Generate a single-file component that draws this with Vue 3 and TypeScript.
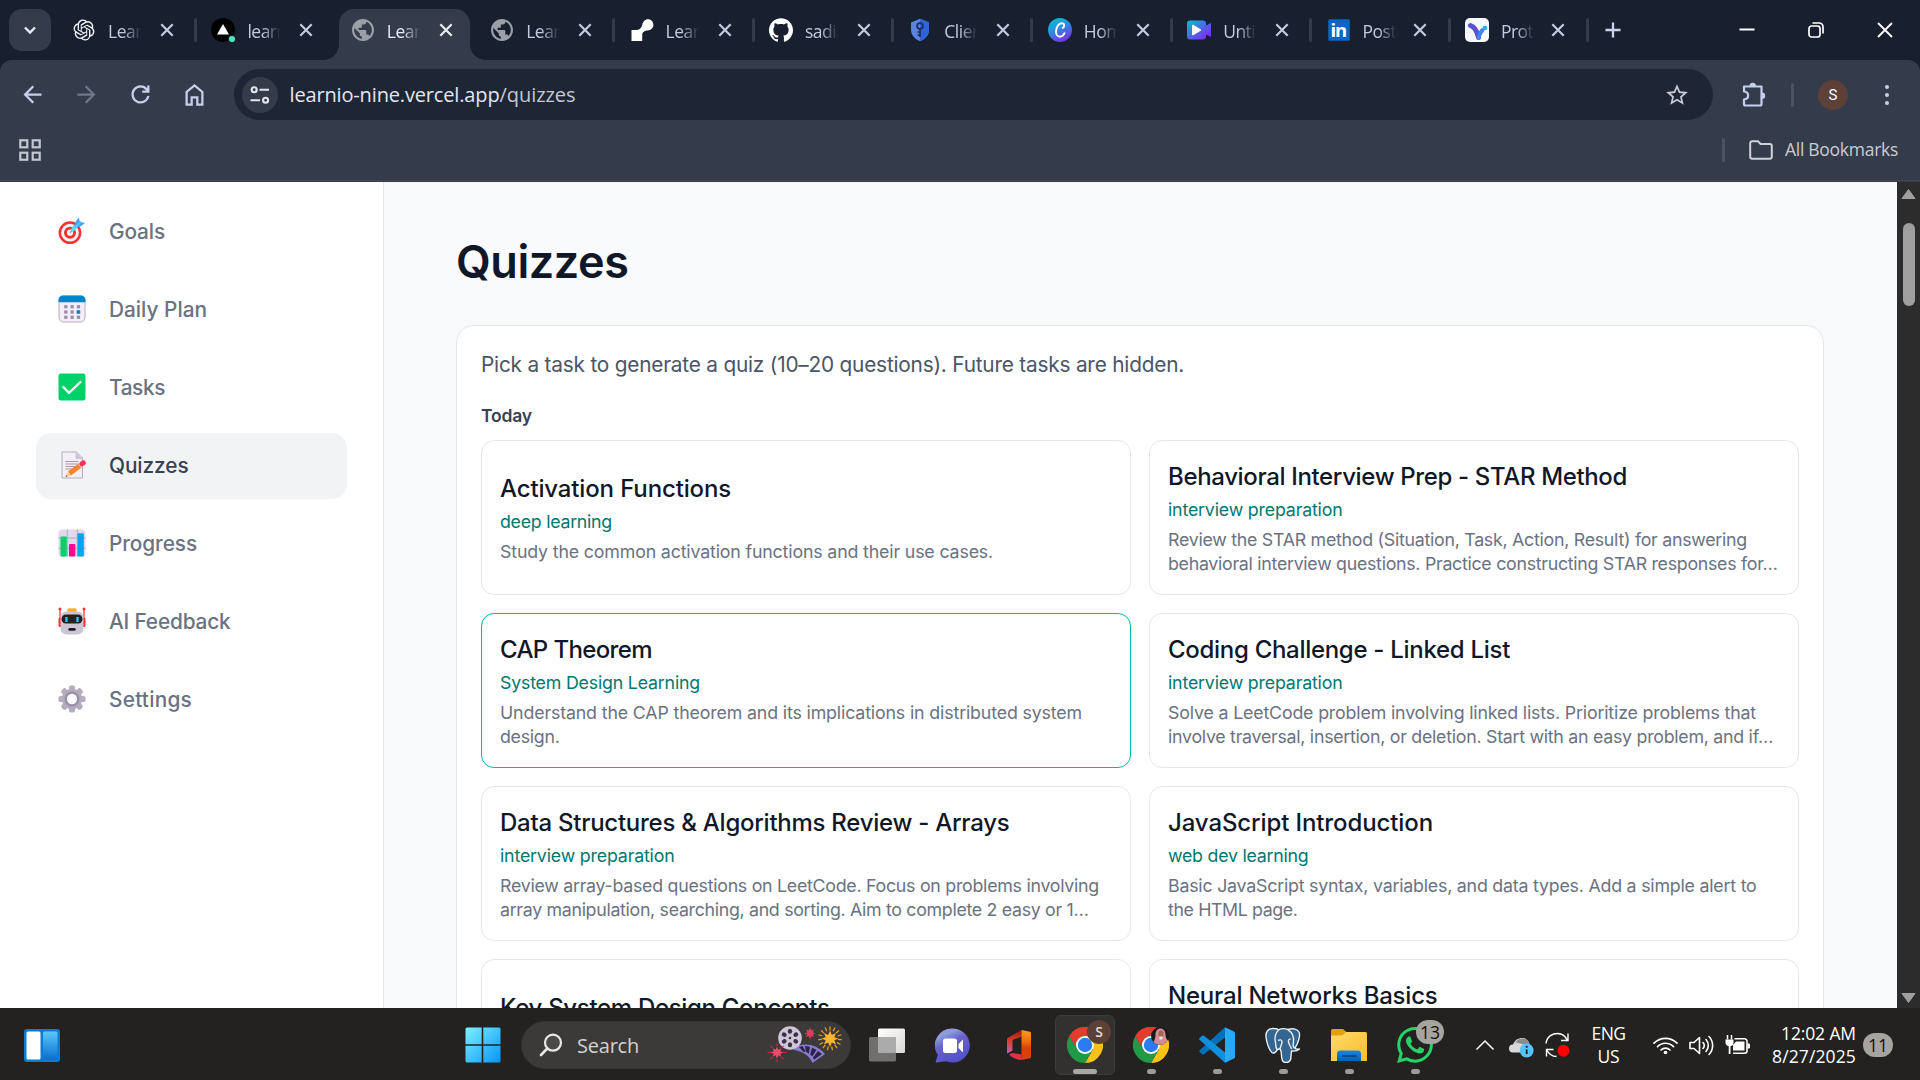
<script setup lang="ts">
import type { Directive } from 'vue'

interface Tab { icon: string; title: string; active?: boolean; divider?: boolean }
interface NavItem { icon: string; label: string; width: number; active?: boolean }
interface Line { text: string; width: number }
interface Quiz { title: Line; goal: Line; lines: Line[]; selected?: boolean }

// Spreads the letters of a run so that it takes the given advance width.
const vTrack: Directive<HTMLElement, number> = {
  mounted(el, { value }) {
    const count = (el.textContent ?? '').trim().length
    const natural = el.getBoundingClientRect().width
    if (count > 0) el.style.letterSpacing = `${((value - natural) / count).toFixed(3)}px`
  },
}

const tabs: Tab[] = [
  { icon: 'openai', title: 'Learn', divider: true },
  { icon: 'vercel', title: 'learnio' },
  { icon: 'globe', title: 'Learn', active: true },
  { icon: 'globe', title: 'Learn', divider: true },
  { icon: 'render', title: 'Learn', divider: true },
  { icon: 'github', title: 'sadia', divider: true },
  { icon: 'shield', title: 'Client', divider: true },
  { icon: 'canva', title: 'Home', divider: true },
  { icon: 'clip', title: 'Untitl', divider: true },
  { icon: 'linkedin', title: 'Post |', divider: true },
  { icon: 'proto', title: 'Proto', divider: true },
]

const nav: NavItem[] = [
  { icon: 'goals', label: 'Goals', width: 56 },
  { icon: 'plan', label: 'Daily Plan', width: 98 },
  { icon: 'tasks', label: 'Tasks', width: 56 },
  { icon: 'quizzes', label: 'Quizzes', width: 79.5, active: true },
  { icon: 'progress', label: 'Progress', width: 88 },
  { icon: 'feedback', label: 'AI Feedback', width: 121.5 },
  { icon: 'settings', label: 'Settings', width: 83 },
]

const quizzes: Quiz[] = [
  {
    title: { text: 'Activation Functions', width: 231 },
    goal: { text: 'deep learning', width: 112 },
    lines: [{ text: 'Study the common activation functions and their use cases.', width: 493 }],
  },
  {
    title: { text: 'Behavioral Interview Prep - STAR Method', width: 459 },
    goal: { text: 'interview preparation', width: 174.5 },
    lines: [
      { text: 'Review the STAR method (Situation, Task, Action, Result) for answering', width: 579 },
      { text: 'behavioral interview questions. Practice constructing STAR responses for…', width: 609.5 },
    ],
  },
  {
    title: { text: 'CAP Theorem', width: 152 },
    goal: { text: 'System Design Learning', width: 200 },
    lines: [
      { text: 'Understand the CAP theorem and its implications in distributed system', width: 582 },
      { text: 'design.', width: 59.5 },
    ],
    selected: true,
  },
  {
    title: { text: 'Coding Challenge - Linked List', width: 342 },
    goal: { text: 'interview preparation', width: 174.5 },
    lines: [
      { text: 'Solve a LeetCode problem involving linked lists. Prioritize problems that', width: 588 },
      { text: 'involve traversal, insertion, or deletion. Start with an easy problem, and if…', width: 605 },
    ],
  },
  {
    title: { text: 'Data Structures & Algorithms Review - Arrays', width: 509.5 },
    goal: { text: 'interview preparation', width: 174.5 },
    lines: [
      { text: 'Review array-based questions on LeetCode. Focus on problems involving', width: 599 },
      { text: 'array manipulation, searching, and sorting. Aim to complete 2 easy or 1…', width: 588.5 },
    ],
  },
  {
    title: { text: 'JavaScript Introduction', width: 265 },
    goal: { text: 'web dev learning', width: 140.5 },
    lines: [
      { text: 'Basic JavaScript syntax, variables, and data types. Add a simple alert to', width: 588.5 },
      { text: 'the HTML page.', width: 129.5 },
    ],
  },
  {
    title: { text: 'Key System Design Concepts', width: 329.5 },
    goal: { text: 'System Design Learning', width: 200 },
    lines: [{ text: 'Learn the key concepts of system design.', width: 345 }],
  },
  {
    title: { text: 'Neural Networks Basics', width: 269.5 },
    goal: { text: 'deep learning', width: 112 },
    lines: [
      { text: 'Learn the basic building blocks of neural networks and how', width: 495 },
      { text: 'layers work together.', width: 176 },
    ],
  },
]

const spokes = [0, 45, 90, 135, 180, 225, 270, 315]
const apps = ['chrome-s', 'chrome-photo', 'vscode', 'postgres', 'folder', 'whatsapp']
</script>

<template>
  <div class="screen">
    <header class="tabstrip">
      <button class="tab-search">
        <svg width="18" height="18" viewBox="0 0 18 18"><path d="M4 6.5l5 5 5-5" fill="none" stroke="#e6e9f2" stroke-width="2.4" /></svg>
      </button>
      <div class="tabs">
        <div v-for="(tab, i) in tabs" :key="i" class="tab" :class="{ active: tab.active, divider: tab.divider }">
          <svg class="favicon" width="24" height="24" viewBox="0 0 24 24">
            <path v-if="tab.icon === 'openai'" transform="translate(1.5 1.5) scale(.875)" fill="#f2f4f8" d="M22.2819 9.8211a5.9847 5.9847 0 0 0-.5157-4.9108 6.0462 6.0462 0 0 0-6.5098-2.9A6.0651 6.0651 0 0 0 4.9807 4.1818a5.9847 5.9847 0 0 0-3.9977 2.9 6.0462 6.0462 0 0 0 .7427 7.0966 5.98 5.98 0 0 0 .511 4.9107 6.051 6.051 0 0 0 6.5146 2.9001A5.9847 5.9847 0 0 0 13.2599 24a6.0557 6.0557 0 0 0 5.7718-4.2058 5.9894 5.9894 0 0 0 3.9977-2.9001 6.0557 6.0557 0 0 0-.7475-7.0729zm-9.022 12.6081a4.4755 4.4755 0 0 1-2.8764-1.0408l.1419-.0804 4.7783-2.7582a.7948.7948 0 0 0 .3927-.6813v-6.7369l2.02 1.1686a.071.071 0 0 1 .038.052v5.5826a4.504 4.504 0 0 1-4.4945 4.4944zm-9.6607-4.1254a4.4708 4.4708 0 0 1-.5346-3.0137l.142.0852 4.783 2.7582a.7712.7712 0 0 0 .7806 0l5.8428-3.3685v2.3324a.0804.0804 0 0 1-.0332.0615L9.74 19.9502a4.4992 4.4992 0 0 1-6.1408-1.6464zM2.3408 7.8956a4.485 4.485 0 0 1 2.3655-1.9728V11.6a.7664.7664 0 0 0 .3879.6765l5.8144 3.3543-2.0201 1.1685a.0757.0757 0 0 1-.071 0l-4.8303-2.7865A4.504 4.504 0 0 1 2.3408 7.872zm16.5963 3.8558L13.1038 8.364 15.1192 7.2a.0757.0757 0 0 1 .071 0l4.8303 2.7913a4.4944 4.4944 0 0 1-.6765 8.1042v-5.6772a.79.79 0 0 0-.407-.667zm2.0107-3.0231l-.142-.0852-4.7735-2.7818a.7759.7759 0 0 0-.7854 0L9.409 9.2297V6.8974a.0662.0662 0 0 1 .0284-.0615l4.8303-2.7866a4.4992 4.4992 0 0 1 6.6802 4.66zM8.3065 12.863l-2.02-1.1638a.0804.0804 0 0 1-.038-.0567V6.0742a4.4992 4.4992 0 0 1 7.3757-3.4537l-.142.0805L8.704 5.459a.7948.7948 0 0 0-.3927.6813zm1.0976-2.3654l2.602-1.4998 2.6069 1.4998v2.9994l-2.5974 1.4997-2.6067-1.4997Z" />
            <g v-else-if="tab.icon === 'vercel'">
              <circle cx="12" cy="12" r="12" fill="#000" />
              <path d="M12 6l6 10.5H6z" fill="#fff" />
              <circle cx="21" cy="21" r="4" fill="#182030" /><circle cx="21" cy="21" r="3.1" fill="#50e3c2" />
            </g>
            <path v-else-if="tab.icon === 'globe'" transform="translate(-1.2 -1.2) scale(1.1)" fill="#9aa0a6" d="M12 2C6.48 2 2 6.48 2 12s4.48 10 10 10 10-4.48 10-10S17.52 2 12 2zm-1 17.93c-3.95-.49-7-3.85-7-7.93 0-.62.08-1.21.21-1.79L9 15v1c0 1.1.9 2 2 2v1.93zm6.9-2.54c-.26-.81-1-1.39-1.9-1.39h-1v-3c0-.55-.45-1-1-1H8v-2h2c.55 0 1-.45 1-1V7h2c1.1 0 2-.9 2-2v-.41c2.93 1.19 5 4.06 5 7.41 0 2.08-.8 3.97-2.1 5.39z" />
            <path v-else-if="tab.icon === 'render'" fill="#fff" d="M1.5 12h4.800c2.700 0 5.200-1.500 5.900-5 .6-3.400 2.900-5.700 5.800-5.700 3.200 0 5.400 2.500 5.400 5.500 0 3.200-2.500 5.700-5.700 5.700-3 0-5.500 1.500-5.500 4.500v6H1.500z" />
            <path v-else-if="tab.icon === 'github'" fill="#fff" d="M12 .297c-6.63 0-12 5.373-12 12 0 5.303 3.438 9.8 8.205 11.385.6.113.82-.258.82-.577 0-.285-.01-1.04-.015-2.04-3.338.724-4.042-1.61-4.042-1.61C4.422 18.07 3.633 17.7 3.633 17.7c-1.087-.744.084-.729.084-.729 1.205.084 1.838 1.236 1.838 1.236 1.07 1.835 2.809 1.305 3.495.998.108-.776.417-1.305.76-1.605-2.665-.3-5.466-1.332-5.466-5.93 0-1.31.465-2.38 1.235-3.22-.135-.303-.54-1.523.105-3.176 0 0 1.005-.322 3.3 1.23.96-.267 1.98-.399 3-.405 1.02.006 2.04.138 3 .405 2.28-1.552 3.285-1.23 3.285-1.23.645 1.653.24 2.873.12 3.176.765.84 1.23 1.91 1.23 3.22 0 4.61-2.805 5.625-5.475 5.92.42.36.81 1.096.81 2.22 0 1.606-.015 2.896-.015 3.286 0 .315.21.69.825.57C20.565 22.092 24 17.592 24 12.297c0-6.627-5.373-12-12-12" />
            <g v-else-if="tab.icon === 'shield'">
              <path d="M12 .8l9 3.600v7.400c0 5-3.500 9.200-9 11.400-5.500-2.200-9-6.400-9-11.400V4.400z" fill="#5b83e0" />
              <path d="M12 .8l9 3.600v7.400c0 5-3.500 9.200-9 11.400z" fill="#2f64d8" />
              <circle cx="12" cy="8" r="2.900" fill="none" stroke="#1c2c55" stroke-width="1.700" />
              <path d="M12 11v8M12 14H9.500M12 17H9.500" stroke="#1c2c55" stroke-width="1.700" />
            </g>
            <g v-else-if="tab.icon === 'canva'">
              <defs><linearGradient id="canvaFill" x1=".2" y1="0" x2=".7" y2="1"><stop offset="0" stop-color="#00c4cc" /><stop offset=".45" stop-color="#2f8be0" /><stop offset="1" stop-color="#7d2ae8" /></linearGradient></defs>
              <circle cx="12" cy="12" r="12" fill="url(#canvaFill)" />
              <path d="M16.500 15.200c-1 2.200-2.600 3.500-4.500 3.500-2.500 0-4-2.100-4-5 0-4.400 2.700-8.400 5.600-8.400 1.600 0 2.500 1 2.500 2.300 0 1.200-.7 2.100-1.500 2.300" fill="none" stroke="#fff" stroke-width="1.900" stroke-linecap="round" />
            </g>
            <g v-else-if="tab.icon === 'clip'">
              <defs><linearGradient id="clipFill" x1="0" y1="0" x2=".9" y2="1"><stop offset="0" stop-color="#00c4cc" /><stop offset=".5" stop-color="#4a6be8" /><stop offset="1" stop-color="#8a1ff0" /></linearGradient></defs>
              <path d="M3 2.500h13a3 3 0 0 1 3 3v2l5-2.500v14l-5-2.500v2a3 3 0 0 1-3 3H3a3 3 0 0 1-3-3v-13a3 3 0 0 1 3-3z" fill="url(#clipFill)" />
              <path d="M5.800 7.500l7.500 4.500-7.500 4.500z" fill="#fff" stroke="#fff" stroke-width="1.500" stroke-linejoin="round" />
            </g>
            <g v-else-if="tab.icon === 'linkedin'">
              <rect x="1.200" y="1.200" width="21.600" height="21.600" rx="1.500" fill="#0a66c2" />
              <text x="3.600" y="19" font-family="Open Sans, sans-serif" font-weight="700" font-size="18.500" fill="#fff" textLength="16.500">in</text>
            </g>
            <g v-else>
              <rect width="24" height="24" rx="5" fill="#f7f8ff" />
              <path d="M5.500 7.500c4 1.500 6.500 5 8 12" fill="none" stroke="#5b50d0" stroke-width="5" stroke-linecap="round" />
              <path d="M13.500 19.500c.8-3.500 2-5.500 4-7.500" fill="none" stroke="#3a86ee" stroke-width="4" stroke-linecap="round" />
              <circle cx="20" cy="10" r="2.300" fill="#27aef5" />
            </g>
          </svg>
          <span class="tab-title">{{ tab.title }}</span>
          <svg class="tab-close" width="14" height="14" viewBox="0 0 14 14"><path d="M1.300 1.300l11.400 11.400M12.700 1.300L1.300 12.700" stroke="currentColor" stroke-width="2.200" /></svg>
        </div>
      </div>
      <button class="new-tab">
        <svg width="16" height="16" viewBox="0 0 16 16"><path d="M8 .5v15M.5 8h15" stroke="#ccd4ea" stroke-width="2.300" /></svg>
      </button>
      <div class="window-controls">
        <span><svg width="16" height="16" viewBox="0 0 16 16"><path d="M.5 7.500h15" stroke="#fff" stroke-width="2" /></svg></span>
        <span><svg width="16" height="16" viewBox="0 0 16 16" fill="none" stroke="#fff" stroke-width="1.700"><rect x="1" y="4" width="11" height="11" rx="2.500" /><path d="M4.500 1h6.500a4 4 0 0 1 4 4v6.500" /></svg></span>
        <span><svg width="16" height="16" viewBox="0 0 16 16"><path d="M1 1l14 14M15 1L1 15" stroke="#fff" stroke-width="1.800" /></svg></span>
      </div>
    </header>

    <div class="toolbar-wrap">
      <div class="toolbar">
        <div class="address-row">
          <span class="tool"><svg width="27" height="27" viewBox="0 0 24 24"><path fill="#c6d0ea" d="M20 11H7.830l5.590-5.590L12 4l-8 8 8 8 1.410-1.410L7.830 13H20v-2z" /></svg></span>
          <span class="tool"><svg width="27" height="27" viewBox="0 0 24 24"><path fill="#71778a" transform="matrix(-1 0 0 1 24 0)" d="M20 11H7.830l5.590-5.590L12 4l-8 8 8 8 1.410-1.410L7.830 13H20v-2z" /></svg></span>
          <span class="tool"><svg width="27" height="27" viewBox="0 0 24 24"><path fill="none" stroke="#c6d0ea" stroke-width="2" d="M19 13.200A7.100 7.100 0 1 1 17.600 7.500l1.300 1.500M19 4v5.500h-5.500" /></svg></span>
          <span class="tool"><svg width="27" height="27" viewBox="0 0 24 24"><path fill="none" stroke="#c6d0ea" stroke-width="2" d="M5 9.700L12 4l7 5.700V21h-4.500v-6.500h-5V21H5z" /></svg></span>
          <div class="omnibox">
            <span class="site-info">
              <svg width="22" height="22" viewBox="0 0 22 22" fill="none" stroke="#e3e6ee" stroke-width="2.100"><circle cx="5.200" cy="5.800" r="2.500" /><path d="M10.500 5.800H20M1.500 16.200H11" /><circle cx="16.600" cy="16.200" r="2.500" /></svg>
            </span>
            <span class="url"><span v-track="210">learnio-nine.vercel.app</span><span v-track="76" class="path">/quizzes</span></span>
            <svg class="star" width="26" height="26" viewBox="0 0 24 24"><path fill="#c9cbd2" d="M22 9.240l-7.190-.62L12 2 9.190 8.630 2 9.240l5.460 4.730L5.820 21 12 17.270 18.180 21l-1.630-7.030L22 9.240zM12 15.400l-3.760 2.270 1-4.280-3.320-2.880 4.380-.38L12 6.100l1.710 4.040 4.380.38-3.320 2.880 1 4.280L12 15.400z" /></svg>
          </div>
          <span class="tool ext">
            <svg width="27" height="27" viewBox="0 0 27 27"><path d="M3 5.500h17.500V23a1.500 1.500 0 0 1-1.500 1.500H4.500A1.500 1.500 0 0 1 3 23v-4.500c5.500-.5 5.500-7.500 0-8z" fill="none" stroke="#c6d0ea" stroke-width="2.200" stroke-linejoin="round" /><path d="M8.500 5a3.200 3.200 0 0 1 6.400 0zM21 11.500a3.200 3.200 0 0 1 0 6.400z" fill="#c6d0ea" /></svg>
          </span>
          <span class="tool-sep"></span>
          <span class="avatar">S</span>
          <span class="menu-dots"><i></i><i></i><i></i></span>
        </div>
        <div class="bookmark-row">
          <svg width="22" height="22" viewBox="0 0 22 22" fill="none" stroke="#c5c8d0" stroke-width="2.200"><rect x="1.300" y="1.300" width="7" height="7" /><rect x="13.700" y="1.300" width="7" height="7" /><rect x="1.300" y="13.700" width="7" height="7" /><rect x="13.700" y="13.700" width="7" height="7" /></svg>
          <span class="bookmark-sep"></span>
          <svg class="folder" width="24" height="20" viewBox="0 0 24 20"><path d="M1.200 16.800V3.200a2 2 0 0 1 2-2H9l2.600 2.700h9.200a2 2 0 0 1 2 2v10.900a2 2 0 0 1-2 2H3.200a2 2 0 0 1-2-2z" fill="none" stroke="#cfd1d7" stroke-width="2" /></svg>
          <span class="all-bookmarks"><span v-track="113">All Bookmarks</span></span>
        </div>
      </div>
    </div>

    <div class="page">
      <aside class="sidebar">
        <a v-for="item in nav" :key="item.label" class="nav-item" :class="{ current: item.active }">
          <svg width="28" height="28" viewBox="0 0 28 28">
            <g v-if="item.icon === 'goals'">
              <circle cx="12" cy="15.700" r="11.400" fill="#f8312f" /><circle cx="12" cy="15.700" r="8.900" fill="#f4f4f4" /><circle cx="12" cy="15.700" r="6" fill="#f8312f" /><circle cx="12" cy="15.700" r="3.100" fill="#f4f4f4" />
              <path d="M12 15.700l6-6" stroke="#9b9b9b" stroke-width="1.300" />
              <path d="M13 12.500l3-4 2-4.500 2.700-3.500 1.300 4.200 5 1.300-3.500 2.800-4.500 2-3.500 3.500z" fill="#46a4fb" />
              <path d="M13.500 11.500l5-3.700 1.500 1.700-4.500 5-2-.5z" fill="#50e2ff" /><path d="M17 11l6-6.500" stroke="#50d0ff" stroke-width="1.200" />
            </g>
            <g v-else-if="item.icon === 'plan'">
              <rect x="1" y="1" width="26" height="26" rx="4.500" fill="#f3eef8" stroke="#b4acbc" />
              <path d="M.5 7.300V5A4.500 4.500 0 0 1 5 .5h18A4.500 4.500 0 0 1 27.500 5v2.300z" fill="#0084ce" />
              <g fill="#998ea4">
                <template v-for="r in 3" :key="r"><rect v-for="c in 3" :key="c" :x="c * 6.300 - .1" :y="r * 5.300 + 4.800" width="3.300" height="3.200" /></template>
              </g>
              <rect x="18.700" y="15.400" width="3.500" height="3.200" fill="#0084ce" />
            </g>
            <g v-else-if="item.icon === 'tasks'">
              <rect x=".5" y=".5" width="27" height="27" rx="2.500" fill="#00d26a" />
              <path d="M5.300 14l5.700 5.800L22.500 9" fill="none" stroke="#f4f4f4" stroke-width="2.400" stroke-linecap="round" stroke-linejoin="round" />
            </g>
            <g v-else-if="item.icon === 'quizzes'">
              <path d="M4 1h14.500l6 6v20H4z" fill="#f3eef8" stroke="#b4acbc" /><path d="M17.500 1l7 7h-7z" fill="#cdc4d6" />
              <path d="M7.500 10.500h13M7.500 13h13M7.500 15.500h10M7.500 18h7" stroke="#998ea4" stroke-width=".9" />
              <path d="M22 14.500l-10.500 8" stroke="#ff822d" stroke-width="5" /><path d="M21.500 14.800l1.500-1.100" stroke="#d3d3d3" stroke-width="5" />
              <path d="M24 12.800l1.300-.9" stroke="#f92f60" stroke-width="5" stroke-linecap="round" /><path d="M10 20.500l3 4-5.500 1z" fill="#ffce7c" /><path d="M8.800 24L7.500 25.700l2-.3z" fill="#402a32" />
            </g>
            <g v-else-if="item.icon === 'progress'">
              <rect x=".5" y=".5" width="27" height="27" rx="3.500" fill="#e1d8ec" />
              <path d="M9.300.5v27M19.300.5v27M.5 9h27M.5 19.300h27" stroke="#b4acbc" stroke-width="1" />
              <rect x="2.500" y="7.500" width="6.300" height="20" rx=".8" fill="#00d26a" /><rect x="11" y="15" width="6.300" height="12.500" rx=".8" fill="#f70a8d" /><rect x="19.500" y="4.300" width="6.300" height="23.200" rx=".8" fill="#00a6ed" />
            </g>
            <g v-else-if="item.icon === 'feedback'">
              <path d="M2 2v18M26 2v18" stroke="#f8312f" stroke-width="1.200" /><circle cx="2" cy="2" r="1.500" fill="#f8312f" /><circle cx="26" cy="2" r="1.500" fill="#f8312f" />
              <rect x=".5" y="10.500" width="3" height="9.500" rx="1.500" fill="#f8312f" /><rect x="24.500" y="10.500" width="3" height="9.500" rx="1.500" fill="#f8312f" />
              <rect x="9.300" y="1.200" width="9.400" height="6" rx="1.500" fill="#ffb02e" />
              <rect x="2.500" y="4.500" width="23" height="23" rx="6" fill="#cdc4d6" />
              <rect x="3.500" y="7.500" width="21" height="9" rx="4.500" fill="#212121" />
              <rect x="7.300" y="10" width="2.300" height="5" fill="#26c9fc" /><rect x="18.300" y="10" width="2.300" height="5" fill="#26c9fc" /><rect x="10.300" y="21" width="7.500" height="2.800" rx="1.400" fill="#212121" />
            </g>
            <g v-else>
              <rect v-for="a in spokes" :key="a" x="11" y=".5" width="6" height="8" rx="2" fill="#b4acbc" :transform="`rotate(${a} 14 14)`" />
              <circle cx="14" cy="14" r="8" fill="none" stroke="#b4acbc" stroke-width="4.500" /><circle cx="14" cy="14" r="6.300" :fill="item.active ? '#f2f3f5' : '#fff'" stroke="#998ea4" stroke-width="2.300" />
            </g>
          </svg>
          <span class="nav-label"><span v-track="item.width">{{ item.label }}</span></span>
        </a>
      </aside>

      <main class="content">
        <h1><span v-track="172.5">Quizzes</span></h1>
        <section class="panel">
          <p class="intro"><span v-track="703">Pick a task to generate a quiz (10–20 questions). Future tasks are hidden.</span></p>
          <h2><span v-track="51">Today</span></h2>
          <div class="grid">
            <article v-for="quiz in quizzes" :key="quiz.title.text" class="card" :class="{ selected: quiz.selected }">
              <h3><span v-track="quiz.title.width">{{ quiz.title.text }}</span></h3>
              <p class="goal"><span v-track="quiz.goal.width">{{ quiz.goal.text }}</span></p>
              <p class="desc">
                <span v-for="line in quiz.lines" :key="line.text" class="line"><span v-track="line.width">{{ line.text }}</span></span>
              </p>
            </article>
          </div>
        </section>
      </main>

      <div class="scrollbar">
        <svg width="15" height="12" viewBox="0 0 15 12"><path d="M7.500 1.500L14 10.500H1z" fill="#9f9f9f" stroke="#9f9f9f" stroke-linejoin="round" /></svg>
        <span class="thumb"></span>
        <svg class="down" width="15" height="12" viewBox="0 0 15 12"><path d="M7.500 10.500L14 1.500H1z" fill="#9f9f9f" stroke="#9f9f9f" stroke-linejoin="round" /></svg>
      </div>
    </div>

    <footer class="taskbar">
      <svg class="widgets" width="36" height="33" viewBox="0 0 36 33">
        <defs><linearGradient id="widgetFill" x1="0" y1="0" x2="0" y2="1"><stop offset="0" stop-color="#5ac8fa" /><stop offset="1" stop-color="#0a6fd0" /></linearGradient></defs>
        <rect width="36" height="33" rx="3" fill="#0c7bd6" /><rect x="2.500" y="2.500" width="14" height="28" rx="1.500" fill="#fff" />
        <rect x="19" y="2.500" width="14.500" height="12" rx="1.500" fill="#1b8be6" /><rect x="19" y="2.500" width="14.500" height="28" rx="1.500" fill="url(#widgetFill)" />
      </svg>
      <svg class="start" width="36" height="36" viewBox="0 0 36 36">
        <defs><linearGradient id="startFill" gradientUnits="userSpaceOnUse" x1="0" y1="0" x2="36" y2="36"><stop offset="0" stop-color="#7df3ff" /><stop offset="1" stop-color="#0693f8" /></linearGradient></defs>
        <path d="M2 .5h14.700v16.700H.5V2A1.500 1.500 0 0 1 2 .5zM18.300.5H34A1.500 1.500 0 0 1 35.500 2v15.200H18.300zM.5 18.800h16.200v16.700H2A1.500 1.500 0 0 1 .5 34zM18.300 18.800h17.200V34a1.500 1.500 0 0 1-1.500 1.500H18.300z" fill="url(#startFill)" />
      </svg>
      <div class="search">
        <svg width="24" height="24" viewBox="0 0 24 24"><circle cx="14" cy="9.700" r="8" fill="#4a4a49" stroke="#e8e8e8" stroke-width="2.200" /><path d="M8.300 15.500L2 22" stroke="#e8e8e8" stroke-width="2.600" stroke-linecap="round" /></svg>
        <span class="search-label"><span v-track="62">Search</span></span>
        <svg class="film" width="78" height="40" viewBox="0 0 78 40">
          <path d="M28 22.500C37 17 51 19 59 29L46.500 38C43 30.500 38 27 28 25z" fill="#8a7bd0" />
          <path d="M33 22l3.500-1 3 5.500-2 .5zM39 21l5 .8-1.200 7-3-2.300zM46 22.500l4.500 2.500-4.300 6.500-2-2zM52 26l4 3-8 5.800-1-2.300z" fill="#2c2345" />
          <circle cx="24" cy="13" r="11.800" fill="#cfc6d8" /><circle cx="24" cy="13" r="1.300" fill="#3c3148" />
          <g fill="#3c2f48"><ellipse v-for="a in [0, 60, 120, 180, 240, 300]" :key="a" cx="24" cy="6.300" rx="2.200" ry="2.500" :transform="`rotate(${a} 24 13)`" /></g>
          <g stroke="#f0a020" stroke-width="1.200"><path v-for="a in [0, 24, 48, 72, 96, 120, 144, 168, 192, 216, 240, 264, 288, 312, 336]" :key="a" d="M64 1.500v4" :transform="`rotate(${a} 64 13.500)`" /></g>
          <path d="M64 5.500l1.800 4.400 4.200-2-1.700 4.300 4.200 1.300-4.200 1.700 1.700 4.300-4.200-2-1.800 4.500-1.800-4.500-4.200 2 1.700-4.300-4.200-1.700 4.200-1.300-1.700-4.300 4.200 2z" fill="#ffb62e" />
          <g stroke="#d02848" stroke-width="1"><path v-for="a in spokes" :key="a" d="M11 18v3" :transform="`rotate(${a} 11 27.500)`" /></g>
          <path d="M11 21.500l1.400 3.200 3-1.500-1.200 3 3.300 1.300-3.300 1.300 1.200 3-3-1.500-1.400 3.200-1.400-3.200-3 1.500 1.200-3-3.300-1.300 3.300-1.300-1.200-3 3 1.500z" fill="#f04a68" />
          <path d="M44 2.500l1.200 3 3-1-1.500 2.800 3 1.200-3 1 1.300 2.500-2.800-.8-1.200 3-1.200-3-2.800.8 1.300-2.500-3-1 3-1.200-1.500-2.800 3 1z" fill="#e63a5c" />
        </svg>
      </div>
      <svg class="task-view" width="36" height="34" viewBox="0 0 36 34">
        <defs><linearGradient id="paneFill" x1="0" y1="0" x2="1" y2="1"><stop offset="0" stop-color="#fff" /><stop offset="1" stop-color="#d8d8d8" /></linearGradient></defs>
        <rect x="9" y=".5" width="27" height="24.500" rx="1.500" fill="url(#paneFill)" /><rect y="9" width="27" height="24.500" rx="1.500" fill="#6f6f6f" /><rect x="9" y="9" width="18" height="16" rx="1" fill="#ababab" />
      </svg>
      <svg class="chat" width="35" height="35" viewBox="0 0 35 35">
        <defs><linearGradient id="chatFill" x1="0" y1="0" x2=".5" y2="1"><stop offset="0" stop-color="#ad82d8" /><stop offset=".25" stop-color="#8ba0dc" /><stop offset=".5" stop-color="#6a62cc" /><stop offset="1" stop-color="#5452c8" /></linearGradient></defs>
        <path d="M18 .5a17 17 0 1 1-6.500 32.800L1.500 34.500c-.8 0-1-.8-.7-1.500l2-6A17 17 0 0 1 18 .5z" fill="url(#chatFill)" />
        <rect x="8" y="10.500" width="14" height="14.500" rx="2.500" fill="#fff" /><path d="M23.500 16l4.500-4.500v13L23.500 20z" fill="#fff" />
      </svg>
      <svg class="office" width="26" height="32" viewBox="0 0 26 32">
        <defs><linearGradient id="officeFill" x1="0" y1="0" x2="0" y2="1"><stop offset="0" stop-color="#a81510" /><stop offset=".5" stop-color="#d8452e" /><stop offset="1" stop-color="#c060b8" /></linearGradient><linearGradient id="officeSide" x1="0" y1="0" x2="0" y2="1"><stop offset="0" stop-color="#ff9c1e" /><stop offset=".4" stop-color="#f26a0a" /><stop offset=".6" stop-color="#de3f05" /></linearGradient></defs>
        <path d="M1 10.500a2 2 0 0 1 1-1.700L15.500 1v6.500L6.500 11v10.500L1 24.500z" fill="url(#officeFill)" /><path d="M3 25.500l3.500-1.500 9 1.500v5.500c-4.500 0-9-2-12.500-5.500z" fill="#e2304a" />
        <path d="M15.500 1l8.500 1.800a1.500 1.500 0 0 1 1 1.400v23.600a1.500 1.500 0 0 1-1 1.400L15.500 31z" fill="url(#officeSide)" />
      </svg>
      <div v-for="app in apps" :key="app" class="app" :class="{ focused: app === 'chrome-s' }">
        <svg v-if="app.startsWith('chrome')" width="36" height="36" viewBox="0 0 36 36">
          <path d="M18 18L2.400 9A18 18 0 0 1 33.600 9z" fill="#ea4335" /><path d="M18 9h15.600A18 18 0 0 1 18 36l7.800-13.500z" fill="#fbc116" />
          <path d="M2.400 9A18 18 0 0 0 18 36l7.800-13.500h-15.600z" fill="#219a48" /><path d="M2.400 9L10.200 22.500 18 18V9z" fill="#219a48" /><path d="M2.400 9A18 18 0 0 1 33.600 9H18a9 9 0 0 0-8.300 5.500L8.500 19.600z" fill="#e33b2e" />
          <circle cx="18" cy="18" r="9" fill="#fff" /><circle cx="18" cy="18" r="7.200" fill="#2b7cf0" />
          <g v-if="app === 'chrome-photo'"><circle cx="27" cy="9" r="9" fill="#1c1719" /><path d="M20.500 15c1-2 2-4 2-7 0-4 2-6.500 5-6.500s5 2.500 5 6.500c0 2 1 4 2.200 5.500a9 9 0 0 1-14.200 1.500z" fill="#d58b92" /><ellipse cx="28" cy="7" rx="2.700" ry="3.500" fill="#a06a50" /><path d="M26 9.500h4l-.8 3h-2.500z" fill="#ece5e2" /></g>
        </svg>
        <svg v-else-if="app === 'vscode'" width="36" height="36" viewBox="0 0 36 36">
          <path d="M26 .3L.6 23.200a1.300 1.300 0 0 0 0 1.800l2.500 2.200a1.500 1.500 0 0 0 1.900 0L26 10.500z" fill="#0070b8" /><path d="M26 35.700L.6 12.800a1.300 1.300 0 0 1 0-1.800l2.500-2.200a1.500 1.500 0 0 1 1.900 0L26 25.500z" fill="#0f8fdc" /><path d="M26 .2l8.500 4A2 2 0 0 1 36 6v24a2 2 0 0 1-1.500 1.800L26 35.800z" fill="#28a9f2" />
        </svg>
        <svg v-else-if="app === 'postgres'" width="36" height="36" viewBox="0 0 36 36" fill="#336791" stroke="#e9eef3" stroke-width="1.400" stroke-linejoin="round">
          <path d="M9 1.500C3 1 .5 5 1 10c.5 5 3 13 6 15.500 2 1.500 4-.5 5-2.500l3-1.500c1 2 1.500 4 1.500 7s.5 7 4.500 7 5-3 5-6.500l.5-5c3.500.5 6.500-.5 8-2-2 .3-4 .2-4.500-1 3.500-5 5.500-13 4-16-2-3.500-7-4-11-2.500-3-1-7-1-9.500.3C12.500 2 10.500 1.500 9 1.500z" />
          <path d="M13.500 3C10 6.500 9.500 11 10.500 15.500c.5 3 0 5 1.500 7M23 2.800c4 2.500 6 7 5.500 11.500-.3 3-1.500 6 1.500 6.700" fill="none" /><path d="M13 13.500c2-1 4-1 4 1.500 0 3-2 4-1.500 6.500M25.500 12c-1.500.3-2.500 1-2 3 .5 2.500 2.500 5 3 7" fill="none" />
        </svg>
        <svg v-else-if="app === 'folder'" width="36" height="34" viewBox="0 0 36 34">
          <defs><linearGradient id="folderFill" x1="0" y1="0" x2="1" y2="1"><stop offset="0" stop-color="#ffdc6b" /><stop offset="1" stop-color="#fcbb2a" /></linearGradient><linearGradient id="trayFill" x1="0" y1="0" x2="0" y2="1"><stop offset="0" stop-color="#1a86e0" /><stop offset="1" stop-color="#0560b0" /></linearGradient></defs>
          <path d="M0 2.500A1.500 1.500 0 0 1 1.500 1H12l4 3.500V12H0z" fill="#e2a010" /><path d="M0 7.500h11l4-3.500h19.500A1.500 1.500 0 0 1 36 5.500V33H0z" fill="url(#folderFill)" />
          <path d="M6 33v-7a3.500 3.500 0 0 1 3.500-3.500h17A3.500 3.500 0 0 1 30 26v7z" fill="url(#trayFill)" /><path d="M11.500 28h13.500" stroke="#043f78" stroke-width="1.600" stroke-linecap="round" />
        </svg>
        <svg v-else width="36" height="36" viewBox="0 0 24 24"><path fill="#25d366" d="M17.472 14.382c-.297-.149-1.758-.867-2.030-.967-.273-.099-.471-.148-.67.150-.197.297-.767.966-.94 1.164-.173.199-.347.223-.644.075-.297-.150-1.255-.463-2.390-1.475-.883-.788-1.480-1.761-1.653-2.059-.173-.297-.018-.458.130-.606.134-.133.298-.347.446-.52.149-.174.198-.298.298-.497.099-.198.050-.371-.025-.52-.075-.149-.669-1.612-.916-2.207-.242-.579-.487-.5-.669-.51-.173-.008-.371-.01-.57-.01-.198 0-.52.074-.792.372-.272.297-1.040 1.016-1.040 2.479 0 1.462 1.065 2.875 1.213 3.074.149.198 2.096 3.200 5.077 4.487.709.306 1.262.489 1.694.625.712.227 1.360.195 1.871.118.571-.085 1.758-.719 2.006-1.413.248-.694.248-1.289.173-1.413-.074-.124-.272-.198-.57-.347m-5.421 7.403h-.004a9.870 9.870 0 01-5.031-1.378l-.361-.214-3.741.982.998-3.648-.235-.374a9.860 9.860 0 01-1.510-5.260c.001-5.450 4.436-9.884 9.888-9.884 2.640 0 5.122 1.030 6.988 2.898a9.825 9.825 0 012.893 6.994c-.003 5.450-4.437 9.884-9.885 9.884m8.413-18.297A11.815 11.815 0 0012.050 0C5.495 0 .16 5.335.157 11.892c0 2.096.547 4.142 1.588 5.945L.057 24l6.305-1.654a11.882 11.882 0 005.683 1.448h.005c6.554 0 11.890-5.335 11.893-11.893a11.821 11.821 0 00-3.480-8.413z" /></svg>
        <span v-if="app === 'chrome-s'" class="badge profile">S</span>
        <span v-if="app === 'whatsapp'" class="badge count">13</span>
        <span class="running"></span>
      </div>
      <div class="tray">
        <svg class="chevron" width="20" height="12" viewBox="0 0 20 12"><path d="M1.500 10.500L10 2l8.500 8.500" fill="none" stroke="#fff" stroke-width="1.500" /></svg>
        <svg class="cloud" width="25" height="21" viewBox="0 0 25 21"><path d="M4 15.500a4 4 0 0 1 0-8C6 2.500 10 .5 14 1c3.500.3 6 3 6.500 6v8.500z" fill="#d8d8d8" /><path d="M6.500 5.500C9 0 18 0 20 5.500L21 9 9 6z" fill="#8c8c8c" /><circle cx="17.700" cy="13.500" r="6.900" fill="#57c3fb" /><path d="M17.700 12.500v4.500" stroke="#222" stroke-width="1.900" /><circle cx="17.700" cy="9.800" r="1.100" fill="#222" /></svg>
        <svg class="update" width="25" height="26" viewBox="0 0 25 26"><path d="M1 11.500C2 4 8 1.500 12.500 1.500c5 0 8 3 9.500 6.500M23 1.500V8.500h-7M1.500 24.500v-7h7M1.500 17.500c2.500 5 6 7 10 7" fill="none" stroke="#fff" stroke-width="1.400" /><circle cx="18.500" cy="18.800" r="6" fill="#f00" /></svg>
        <div class="lang"><span v-track="34">ENG</span><span v-track="22">US</span></div>
        <svg class="wifi" width="25" height="19" viewBox="0 0 25 19" fill="none" stroke="#fff" stroke-width="1.700" stroke-linecap="round"><path d="M1 7.200a16 16 0 0 1 23 0M4.500 10.700a11 11 0 0 1 16 0M8 14a6.500 6.500 0 0 1 9 0" /><circle cx="12.500" cy="16.500" r="1.800" fill="#fff" stroke="none" /></svg>
        <svg class="volume" width="25" height="21" viewBox="0 0 25 21" fill="none" stroke="#fff" stroke-width="1.600" stroke-linecap="round" stroke-linejoin="round"><path d="M1 7.500v6h4l5.500 5V2.500L5 7.500zM14 7.500a4.500 4.500 0 0 1 0 6M17 4.500a9 9 0 0 1 0 12M20 1.500a13 13 0 0 1 0 18" /></svg>
        <svg class="battery" width="25" height="20" viewBox="0 0 25 20"><path d="M9.500 3.800h10a2.500 2.500 0 0 1 2.500 2.500v9.400a2.500 2.500 0 0 1-2.500 2.500H8" fill="none" stroke="#fff" stroke-width="1.600" /><path d="M11 6.500h8.500v9H8V10zM22.500 8.500H24a1 1 0 0 1 1 1v3a1 1 0 0 1-1 1h-1.500zM.5 4.500h8v3a4 4 0 0 1-3 3.800V19H3.700v-7.700A4 4 0 0 1 .5 7.500z" fill="#fff" /><path d="M2.500 4.500V0M6.500 4.500V0" stroke="#fff" stroke-width="1.500" /></svg>
        <div class="clock"><span v-track="75">12:02 AM</span><span v-track="84">8/27/2025</span></div>
        <span class="notice">11</span>
      </div>
    </footer>
  </div>
</template>

<style>
html, body { margin: 0; overflow: hidden; }
</style>

<style scoped>
.screen { width: 1920px; height: 1080px; display: flex; flex-direction: column; overflow: hidden; font-family: "Open Sans", "Noto Sans", sans-serif; background: #182030; }
.screen * { box-sizing: border-box; }
button { border: 0; padding: 0; background: none; }
svg { display: block; flex: none; }
span { white-space: nowrap; }

.tabstrip { height: 60px; flex: none; display: flex; background: #182030; }
.tab-search { width: 42px; height: 42px; margin: 9px 9px 0; border-radius: 13px; background: #343b4b; display: flex; align-items: center; justify-content: center; }
.tabs { display: flex; gap: 8.4px; }
.tab { position: relative; width: 131px; height: 51px; margin-top: 9px; padding: 0 0 9px 12px; display: flex; align-items: center; color: #c3cbe0; }
.tab:nth-child(n+10) { width: 130px; }
.tab-title { width: 34px; margin-left: 12px; padding-top: 1px; overflow: hidden; font-size: 17.5px; line-height: 26px; letter-spacing: -.5px; -webkit-mask-image: linear-gradient(90deg, #000 45%, transparent 98%); mask-image: linear-gradient(90deg, #000 45%, transparent 98%); }
.tab-close { margin-left: 18px; }
.tab:nth-child(n+10) .tab-close { margin-left: 16.500px; }
.tab.active { background: #343b4b; border-radius: 15px 15px 0 0; color: #e8ebf3; }
.tab.active::before, .tab.active::after { content: ""; position: absolute; bottom: 0; width: 15px; height: 15px; }
.tab.active::before { left: -15px; background: radial-gradient(circle at 0 0, transparent 14.5px, #343b4b 15px); }
.tab.active::after { right: -15px; background: radial-gradient(circle at 100% 0, transparent 14.5px, #343b4b 15px); }
.tab.divider:not(.active)::after { content: ""; position: absolute; right: -6px; top: 9px; width: 3px; height: 24px; border-radius: 2px; background: #343b4b; }
.new-tab { width: 39px; margin-left: 11px; display: flex; align-items: center; justify-content: center; }
.window-controls { margin-left: auto; padding-right: 1px; display: flex; }
.window-controls span { width: 69px; display: flex; align-items: center; justify-content: center; }

.toolbar-wrap { flex: none; height: 122px; background: #182030; }
.toolbar { height: 122px; border-radius: 12px 12px 0 0; background: linear-gradient(#343b4b 120px, #4a474c 120px, #4a474c 121px, #343b4b 121px); }
.address-row { height: 69px; padding: 0 6px 0 5.500px; display: flex; align-items: center; }
.tool { width: 54px; display: flex; justify-content: center; }
.omnibox { width: 1479px; height: 51px; margin-left: 12.500px; border-radius: 26px; background: #1e2636; display: flex; align-items: center; padding: 0 23px 0 8px; }
.site-info { width: 36px; height: 36px; border-radius: 50%; background: #343b4b; display: flex; align-items: center; justify-content: center; }
.url { margin-left: 11.500px; font-size: 20px; line-height: 30px; color: #e3e6ee; }
.path { color: #c5c9d3; }
.star { margin-left: auto; }
.ext { margin-left: 14px; }
.tool-sep { width: 3px; height: 24px; margin-left: 10px; border-radius: 2px; background: #4b5264; }
.avatar { width: 30px; height: 30px; margin-left: 24px; border-radius: 50%; background: #5d4037; color: #fff; font: 15px/30px Roboto, sans-serif; text-align: center; }
.menu-dots { width: 4px; margin-left: 37px; display: flex; flex-direction: column; gap: 4px; }
.menu-dots i { width: 4px; height: 4px; border-radius: 50%; background: #c6d0ea; }
.bookmark-row { height: 42px; display: flex; align-items: center; padding: 0 0 0 19px; }
.bookmark-sep { width: 3px; height: 24px; margin-left: auto; border-radius: 2px; background: #4b5264; }
.folder { margin-left: 24px; }
.all-bookmarks { width: 135px; margin-left: 12px; padding-bottom: 2px; font-size: 17.500px; color: #c9ccd3; }

.page { flex: 1; min-height: 0; display: flex; background: #f9fafc; font-family: Inter, "Liberation Sans", sans-serif; }
.sidebar { width: 384px; flex: none; padding: 17px 36px 0; display: flex; flex-direction: column; gap: 12px; background: #fff; border-right: 1px solid #e5e7eb; }
.nav-item { height: 66px; width: 311px; flex: none; padding: 0 0 2px 22px; display: flex; align-items: center; border-radius: 15px; color: #6a7282; font-size: 20.800px; font-weight: 450; }
.nav-label { margin-left: 23px; }
.nav-item.current { background: #f2f3f5; color: #364153; }
.content { flex: 1; min-width: 0; padding: 50px 72px 0; overflow: hidden; }
h1, h2, h3, p { margin: 0; }
h1 { height: 60px; margin-bottom: 33px; font-size: 45px; line-height: 60px; font-weight: 600; color: #101828; }
.panel { width: 1368px; height: 1100px; padding: 24px; background: #fff; border: 1px solid #e5e7eb; border-radius: 18px; }
.intro { font-size: 20.800px; line-height: 30px; color: #4a5565; }
h2 { margin: 24px 0 12px; font-size: 17.500px; line-height: 24px; font-weight: 600; color: #364153; }
.grid { display: grid; grid-template-columns: 1fr 1fr; grid-auto-rows: 155px; gap: 18px; }
.card { padding: 0 18px; border: 1px solid #e5e7eb; border-radius: 13px; display: flex; flex-direction: column; justify-content: center; overflow: hidden; }
.card.selected { border-color: #00bba7; }
h3 { font-size: 24px; line-height: 36px; font-weight: 500; color: #101828; }
.goal { margin-top: 3px; font-size: 17.800px; line-height: 24px; color: #00786f; }
.desc { margin-top: 6px; font-size: 17.800px; line-height: 24px; color: #6a7282; }
.line { display: block; }
.scrollbar { width: 23px; flex: none; padding: 6px 0 4px; display: flex; flex-direction: column; align-items: center; background: #2c2c2c; }
.thumb { width: 12px; height: 83px; margin-top: 23px; border-radius: 6px; background: #9f9f9f; }
.down { margin-top: auto; }

.taskbar { height: 72px; flex: none; display: flex; align-items: center; background: #232221; color: #fff; padding-top: 2px; }
.widgets { margin-left: 24px; }
.start { margin-left: 405px; }
.search { width: 330px; height: 48px; margin-left: 20px; padding: 0 6px 0 17px; display: flex; align-items: center; border: 1px solid #353434; border-radius: 24px; background: #3b3a39; }
.search-label { margin-left: 14px; font-size: 20px; color: #d2d2d2; }
.film { margin-left: auto; }
.task-view { margin-left: 18px; }
.chat { margin-left: 30px; }
.office { margin: 0 23px 0 36px; }
.app { position: relative; width: 60px; height: 60px; margin-right: 6px; flex: none; display: flex; align-items: center; justify-content: center; border-radius: 6px; }
.focused { background: #323130; border: 1px solid #3c3b3a; }
.running { position: absolute; left: 50%; bottom: 1px; width: 9px; height: 5px; margin-left: -4.500px; border-radius: 3px; background: #9c9b9a; }
.focused .running { width: 24px; margin-left: -12px; bottom: 0; background: #a8a7a4; }
.badge { position: absolute; height: 24px; border-radius: 12px; text-align: center; line-height: 24px; }
.profile { right: 3px; top: 4px; width: 24px; background: #5d4037; color: #e8dcd8; font-size: 14px; font-weight: 600; }
.count { right: 1px; top: 5px; width: 28px; background: #a5a49f; color: #111; font-size: 17.500px; }
.tray { flex: 1; height: 100%; display: flex; align-items: center; }
.chevron { margin-left: 24px; }
.cloud { margin-left: 13.500px; margin-top: 4px; }
.update { margin-left: 11px; }
.lang { width: 50px; margin-left: 14px; display: flex; flex-direction: column; align-items: center; font-size: 17.500px; line-height: 23px; }
.wifi { margin-left: 19.500px; }
.volume { margin-left: 11px; }
.battery { margin-left: 11px; }
.clock { width: 106px; display: flex; flex-direction: column; align-items: flex-end; font-size: 17.500px; line-height: 23px; }
.notice { width: 30px; height: 24px; margin-left: 7px; border-radius: 12px; background: #a5a49f; color: #111; font-size: 17.500px; line-height: 24px; text-align: center; }
</style>
